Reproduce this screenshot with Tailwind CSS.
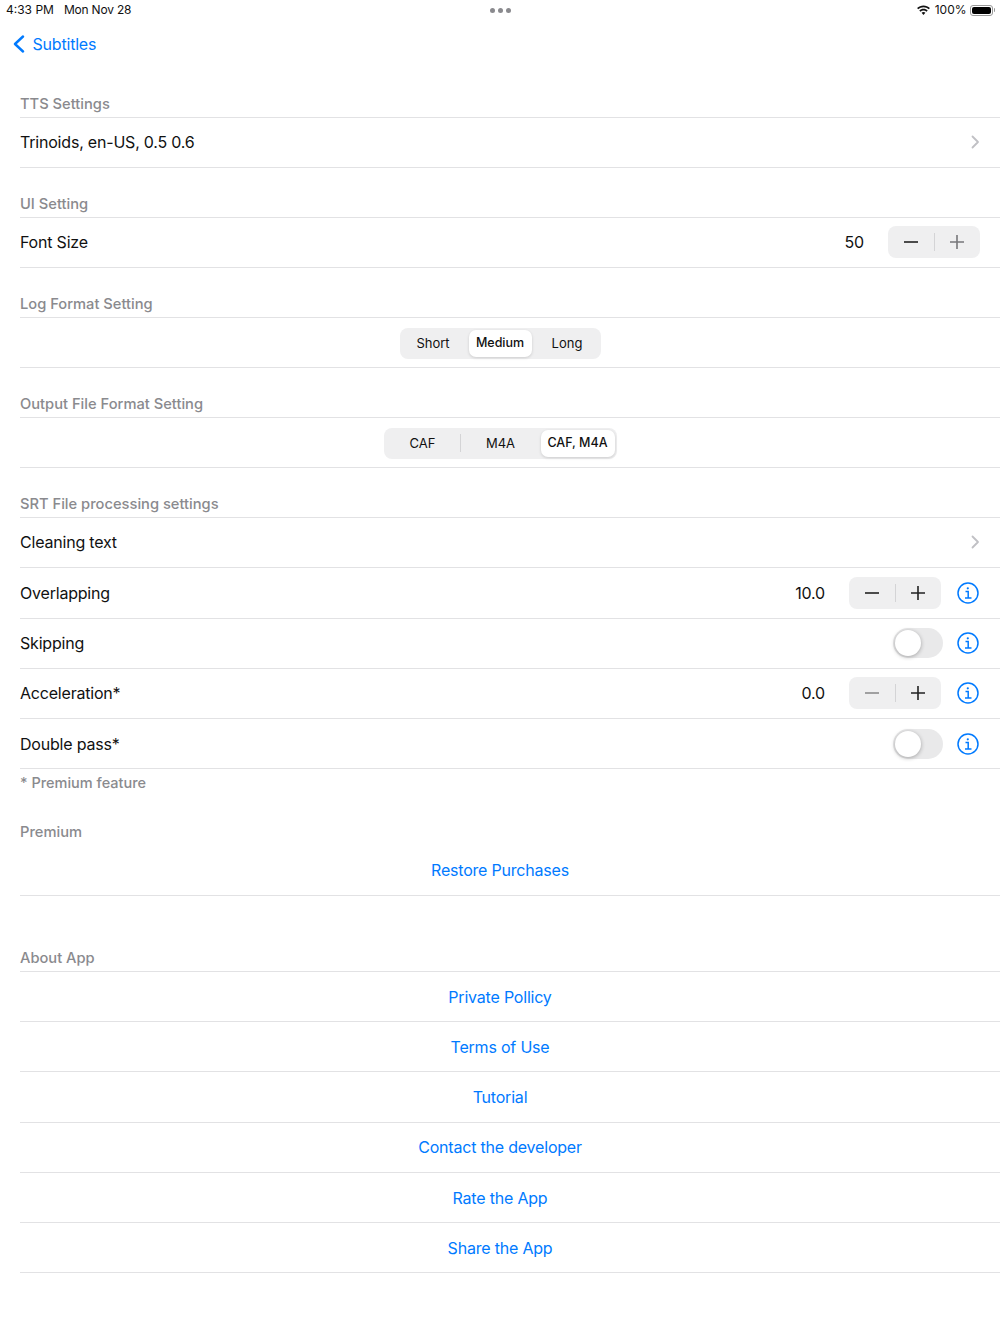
<!DOCTYPE html>
<html lang="en">
<head>
  <meta charset="UTF-8" />
  <title>Settings</title>
  <script src="https://cdn.jsdelivr.net/npm/@tailwindcss/browser@4"></script>
</head>
<body class="bg-white font-['Inter',sans-serif] text-[#111] w-[1000px] h-[1334px] overflow-hidden">

  <!-- status bar -->
  <div class="h-[20px] flex items-center pl-[6px] pr-[5px] text-[12px] text-[#111]">
    <div class="flex-1 flex gap-[10px]"><span>4:33 PM</span><span class="tracking-[-0.2px]">Mon Nov 28</span></div>
    <div class="flex gap-[3px]">
      <span class="w-[5px] h-[5px] rounded-full bg-[#8a8a8e]"></span>
      <span class="w-[5px] h-[5px] rounded-full bg-[#8a8a8e]"></span>
      <span class="w-[5px] h-[5px] rounded-full bg-[#8a8a8e]"></span>
    </div>
    <div class="flex-1 flex items-center justify-end gap-[4px]">
      <svg width="15" height="11" viewBox="0 0 15 11" fill="#111"><path d="M7.5 2.2c2 0 3.9.8 5.3 2.1l1.1-1.2C12.200 1.500 9.900.5 7.500.5S2.800 1.500 1.100 3.100l1.100 1.200C3.600 3 5.500 2.200 7.500 2.200z"/><path d="M7.500 5.500c1.100 0 2.200.4 3 1.200l1.200-1.200C10.600 4.400 9.100 3.800 7.500 3.800s-3.100.6-4.200 1.700l1.200 1.200c.8-.8 1.900-1.200 3-1.200z"/><path d="M7.500 7c-.8 0-1.400.3-1.900.8l1.900 2.200 1.900-2.200C8.900 7.300 8.300 7 7.500 7z"/></svg>
      <span>100%</span>
      <div class="flex items-center gap-[1px] ml-[-1px]">
        <div class="w-[23px] h-[11px] rounded-[3px] border border-[#999] p-[1px]"><div class="w-full h-full rounded-[2px] bg-black"></div></div>
        <div class="w-[1.500px] h-[4px] bg-[#999] rounded-r-sm"></div>
      </div>
    </div>
  </div>

  <!-- nav -->
  <div class="h-[49px] pb-[2px] flex items-center pl-[13px] gap-[7.500px] text-[16px] tracking-[-0.2px] text-[#007aff]">
    <svg width="12" height="18" viewBox="0 0 12 18" fill="none" stroke="#007aff" stroke-width="2.400" stroke-linecap="round" stroke-linejoin="round"><path d="M10 1.500 2 9l8 7.500"/></svg>
    <span>Subtitles</span>
  </div>

  <div class="ml-[20px]">
    <!-- TTS -->
    <div class="h-[49.300px] flex items-end pb-[2px] border-b border-[#e2e2e4] text-[14.700px] font-medium text-[#8a8a8e]">TTS Settings</div>
    <div class="h-[50px] pb-[1px] flex items-center justify-between pr-[20px] border-b border-[#e2e2e4] text-[16px] tracking-[-0.2px]">
      <span>Trinoids, en-US, 0.5 0.6</span>
      <svg width="9" height="14" viewBox="0 0 9 14" fill="none" stroke="#c0c0c4" stroke-width="1.800" stroke-linecap="round" stroke-linejoin="round"><path d="M1.500 1.500 7 7l-5.500 5.500"/></svg>
    </div>

    <!-- UI -->
    <div class="h-[50px] flex items-end pb-[2px] border-b border-[#e2e2e4] text-[14.700px] font-medium text-[#8a8a8e]">UI Setting</div>
    <div class="h-[50px] pb-[1px] flex items-center pr-[20px] border-b border-[#e2e2e4] text-[16px] tracking-[-0.2px]">
      <span class="mr-auto">Font Size</span>
      <span class="mr-[24px]">50</span>
      <div class="w-[92px] h-[32px] rounded-[8px] bg-[#efeff0] flex items-center">
        <div class="flex-1 flex justify-center"><svg width="14" height="14" viewBox="0 0 14 14" stroke="#222" stroke-width="1.600"><path d="M0 7h14"/></svg></div>
        <div class="w-px h-[18px] bg-[#d4d4d6]"></div>
        <div class="flex-1 flex justify-center"><svg width="14" height="14" viewBox="0 0 14 14" stroke="#77777a" stroke-width="1.600"><path d="M0 7h14M7 0v14"/></svg></div>
      </div>
    </div>

    <!-- Log format -->
    <div class="h-[50px] flex items-end pb-[2px] border-b border-[#e2e2e4] text-[14.700px] font-medium text-[#8a8a8e]">Log Format Setting</div>
    <div class="h-[50px] pt-[1px] flex items-center justify-center pr-[20px] border-b border-[#e2e2e4]">
      <div class="w-[201px] h-[31px] rounded-[8px] bg-[#efeff0] flex items-center p-[2px] text-[13px]">
        <div class="w-[67px] pr-[4px] text-center">Short</div>
        <div class="w-[63px] h-[27px] rounded-[7px] bg-white shadow-[0_1px_3px_rgba(0,0,0,0.15)] flex items-center justify-center font-medium text-[12.500px]">Medium</div>
        <div class="flex-1 pl-[4px] text-center">Long</div>
      </div>
    </div>

    <!-- Output format -->
    <div class="h-[50px] flex items-end pb-[2px] border-b border-[#e2e2e4] text-[14.700px] font-medium text-[#8a8a8e]">Output File Format Setting</div>
    <div class="h-[50px] pt-[1px] flex items-center justify-center pr-[20px] border-b border-[#e2e2e4]">
      <div class="w-[233px] h-[31px] rounded-[8px] bg-[#efeff0] flex items-center p-[2px] text-[13px]">
        <div class="w-[74px] text-center">CAF</div>
        <div class="w-px h-[18px] bg-[#d4d4d6]"></div>
        <div class="w-[80px] text-center">M4A</div>
        <div class="flex-1 h-[27px] rounded-[7px] bg-white shadow-[0_1px_3px_rgba(0,0,0,0.15)] flex items-center justify-center font-medium text-[12.500px]">CAF, M4A</div>
      </div>
    </div>

    <!-- SRT -->
    <div class="h-[50.200px] flex items-end pb-[2px] border-b border-[#e2e2e4] text-[14.700px] font-medium text-[#8a8a8e]">SRT File processing settings</div>
    <div class="h-[50px] pb-[1px] flex items-center justify-between pr-[20px] border-b border-[#e2e2e4] text-[16px] tracking-[-0.2px]">
      <span>Cleaning text</span>
      <svg width="9" height="14" viewBox="0 0 9 14" fill="none" stroke="#c0c0c4" stroke-width="1.800" stroke-linecap="round" stroke-linejoin="round"><path d="M1.500 1.500 7 7l-5.500 5.500"/></svg>
    </div>
    <div class="h-[50.200px] flex items-center pr-[21px] border-b border-[#e2e2e4] text-[16px] tracking-[-0.2px]">
      <span class="mr-auto">Overlapping</span>
      <span class="mr-[24px]">10.0</span>
      <div class="w-[92px] h-[32px] rounded-[8px] bg-[#efeff0] flex items-center">
        <div class="flex-1 flex justify-center"><svg width="14" height="14" viewBox="0 0 14 14" stroke="#222" stroke-width="1.600"><path d="M0 7h14"/></svg></div>
        <div class="w-px h-[18px] bg-[#d4d4d6]"></div>
        <div class="flex-1 flex justify-center"><svg width="14" height="14" viewBox="0 0 14 14" stroke="#222" stroke-width="1.600"><path d="M0 7h14M7 0v14"/></svg></div>
      </div>
      <svg class="ml-[16px]" width="22" height="22" viewBox="0 0 22 22" fill="none" stroke="#007aff" stroke-width="1.500"><circle cx="11" cy="11" r="10"/><path d="M8.500 9.500H11.200V16M8 16h6.500"/><circle cx="10.800" cy="6.300" r="1.100" fill="#007aff" stroke="none"/></svg>
    </div>
    <div class="h-[50.200px] flex items-center pr-[21px] border-b border-[#e2e2e4] text-[16px] tracking-[-0.2px]">
      <span class="mr-auto">Skipping</span>
      <div class="w-[50px] h-[30px] rounded-full bg-[#e9e9ea] p-[2px]"><div class="w-[26px] h-[26px] rounded-full bg-white shadow-[0_1px_4px_rgba(0,0,0,0.3)]"></div></div>
      <svg class="ml-[14px]" width="22" height="22" viewBox="0 0 22 22" fill="none" stroke="#007aff" stroke-width="1.500"><circle cx="11" cy="11" r="10"/><path d="M8.500 9.500H11.200V16M8 16h6.500"/><circle cx="10.800" cy="6.300" r="1.100" fill="#007aff" stroke="none"/></svg>
    </div>
    <div class="h-[50.200px] flex items-center pr-[21px] border-b border-[#e2e2e4] text-[16px] tracking-[-0.2px]">
      <span class="mr-auto">Acceleration*</span>
      <span class="mr-[24px]">0.0</span>
      <div class="w-[92px] h-[32px] rounded-[8px] bg-[#efeff0] flex items-center">
        <div class="flex-1 flex justify-center"><svg width="14" height="14" viewBox="0 0 14 14" stroke="#8c8c8e" stroke-width="1.600"><path d="M0 7h14"/></svg></div>
        <div class="w-px h-[18px] bg-[#d4d4d6]"></div>
        <div class="flex-1 flex justify-center"><svg width="14" height="14" viewBox="0 0 14 14" stroke="#222" stroke-width="1.600"><path d="M0 7h14M7 0v14"/></svg></div>
      </div>
      <svg class="ml-[16px]" width="22" height="22" viewBox="0 0 22 22" fill="none" stroke="#007aff" stroke-width="1.500"><circle cx="11" cy="11" r="10"/><path d="M8.500 9.500H11.200V16M8 16h6.500"/><circle cx="10.800" cy="6.300" r="1.100" fill="#007aff" stroke="none"/></svg>
    </div>
    <div class="h-[50.200px] flex items-center pr-[21px] border-b border-[#e2e2e4] text-[16px] tracking-[-0.2px]">
      <span class="mr-auto">Double pass*</span>
      <div class="w-[50px] h-[30px] rounded-full bg-[#e9e9ea] p-[2px]"><div class="w-[26px] h-[26px] rounded-full bg-white shadow-[0_1px_4px_rgba(0,0,0,0.3)]"></div></div>
      <svg class="ml-[14px]" width="22" height="22" viewBox="0 0 22 22" fill="none" stroke="#007aff" stroke-width="1.500"><circle cx="11" cy="11" r="10"/><path d="M8.500 9.500H11.200V16M8 16h6.500"/><circle cx="10.800" cy="6.300" r="1.100" fill="#007aff" stroke="none"/></svg>
    </div>
    <div class="h-[29px] pb-[2px] flex items-center text-[14.500px] font-medium text-[#8a8a8e]">* Premium feature</div>

    <!-- Premium -->
    <div class="h-[45px] flex items-end text-[14.700px] font-medium text-[#8a8a8e]">Premium</div>
    <div class="h-[53px] pt-[1px] flex items-center justify-center border-b border-[#e2e2e4] text-[16px] tracking-[-0.2px] text-[#007aff] pr-[20px]">Restore Purchases</div>

    <!-- About -->
    <div class="h-[75.800px] flex items-end pb-[2px] border-b border-[#e2e2e4] text-[14.700px] font-medium text-[#8a8a8e]">About App</div>
    <div class="h-[50.200px] pt-[1px] flex items-center justify-center border-b border-[#e2e2e4] text-[16px] tracking-[-0.2px] text-[#007aff] pr-[20px]">Private Pollicy</div>
    <div class="h-[50.200px] pt-[1px] flex items-center justify-center border-b border-[#e2e2e4] text-[16px] tracking-[-0.2px] text-[#007aff] pr-[20px]">Terms of Use</div>
    <div class="h-[50.200px] flex items-center justify-center border-b border-[#e2e2e4] text-[16px] tracking-[-0.2px] text-[#007aff] pr-[20px]">Tutorial</div>
    <div class="h-[50.200px] flex items-center justify-center border-b border-[#e2e2e4] text-[16px] tracking-[-0.2px] text-[#007aff] pr-[20px]">Contact the developer</div>
    <div class="h-[50.200px] pt-[1px] flex items-center justify-center border-b border-[#e2e2e4] text-[16px] tracking-[-0.2px] text-[#007aff] pr-[20px]">Rate the App</div>
    <div class="h-[50.200px] pt-[1px] flex items-center justify-center border-b border-[#e2e2e4] text-[16px] tracking-[-0.2px] text-[#007aff] pr-[20px]">Share the App</div>
  </div>

</body>
</html>
